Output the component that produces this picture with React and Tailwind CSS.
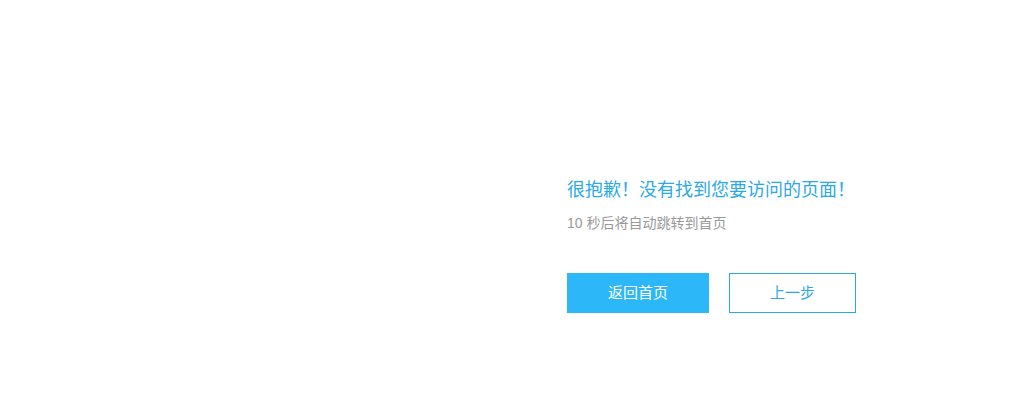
export default function App() {
  return (
    <div
      className="flex h-[400px] w-full bg-white"
      style={{ fontFamily: '"Liberation Sans", "Noto Sans CJK SC", sans-serif' }}
    >
      {/* picture area (empty) */}
      <div className="w-[567px] shrink-0" />

      <div className="pt-[177px]">
        <h1 className="text-[18px] leading-[26px] text-[#2ba8e8]">很抱歉！没有找到您要访问的页面！</h1>
        <p className="mt-[11px] text-[14px] leading-[19px] text-[#999999]">10 秒后将自动跳转到首页</p>

        <div className="mt-[40px] flex gap-[20px]">
          <a className="flex h-[40px] w-[142px] items-center justify-center bg-[#2cb7f8] text-[15px] text-white">
            返回首页
          </a>
          <a className="flex h-[40px] w-[127px] items-center justify-center border border-[#2ba8e8] text-[15px] text-[#2ba8e8]">
            上一步
          </a>
        </div>
      </div>
    </div>
  );
}
